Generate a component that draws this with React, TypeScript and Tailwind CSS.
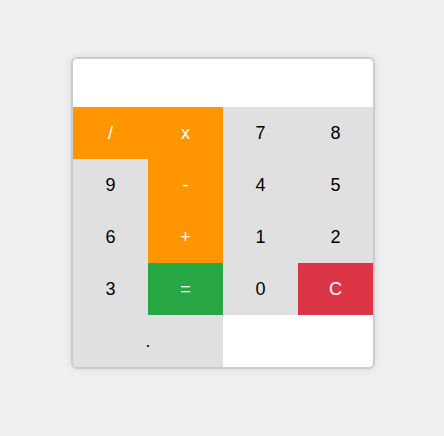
import React from "react";

type B = { label: string; cls: string; span?: boolean };

const orange = "bg-[#ff9500] text-white";
const gray = "bg-[#e0e0e0] text-black";

const buttons: B[] = [
  { label: "/", cls: orange },
  { label: "x", cls: orange },
  { label: "7", cls: gray },
  { label: "8", cls: gray },
  { label: "9", cls: gray },
  { label: "-", cls: orange },
  { label: "4", cls: gray },
  { label: "5", cls: gray },
  { label: "6", cls: gray },
  { label: "+", cls: orange },
  { label: "1", cls: gray },
  { label: "2", cls: gray },
  { label: "3", cls: gray },
  { label: "=", cls: "bg-[#28a745] text-white" },
  { label: "0", cls: gray },
  { label: "C", cls: "bg-[#dc3545] text-white" },
  { label: ".", cls: gray, span: true },
];

export default function App() {
  return (
    <div
      className="w-[444px] h-[436px] bg-[#f0f0f0] pl-[71px] pt-[57px]"
      style={{ fontFamily: '"Liberation Sans", Arial, sans-serif' }}
    >
      <div className="w-[304px] border-2 border-[#cccccc] rounded-[6px] bg-white overflow-hidden shadow-[0_0_10px_rgba(0,0,0,0.1)]">
        <div className="h-[48px] bg-white" />
        <div className="grid grid-cols-4 auto-rows-[52px]">
          {buttons.map((b, i) => (
            <div
              key={i}
              className={`flex items-center justify-center text-[18px] ${b.cls} ${b.span ? "col-span-2" : ""}`}
            >
              {b.label}
            </div>
          ))}
        </div>
      </div>
    </div>
  );
}
